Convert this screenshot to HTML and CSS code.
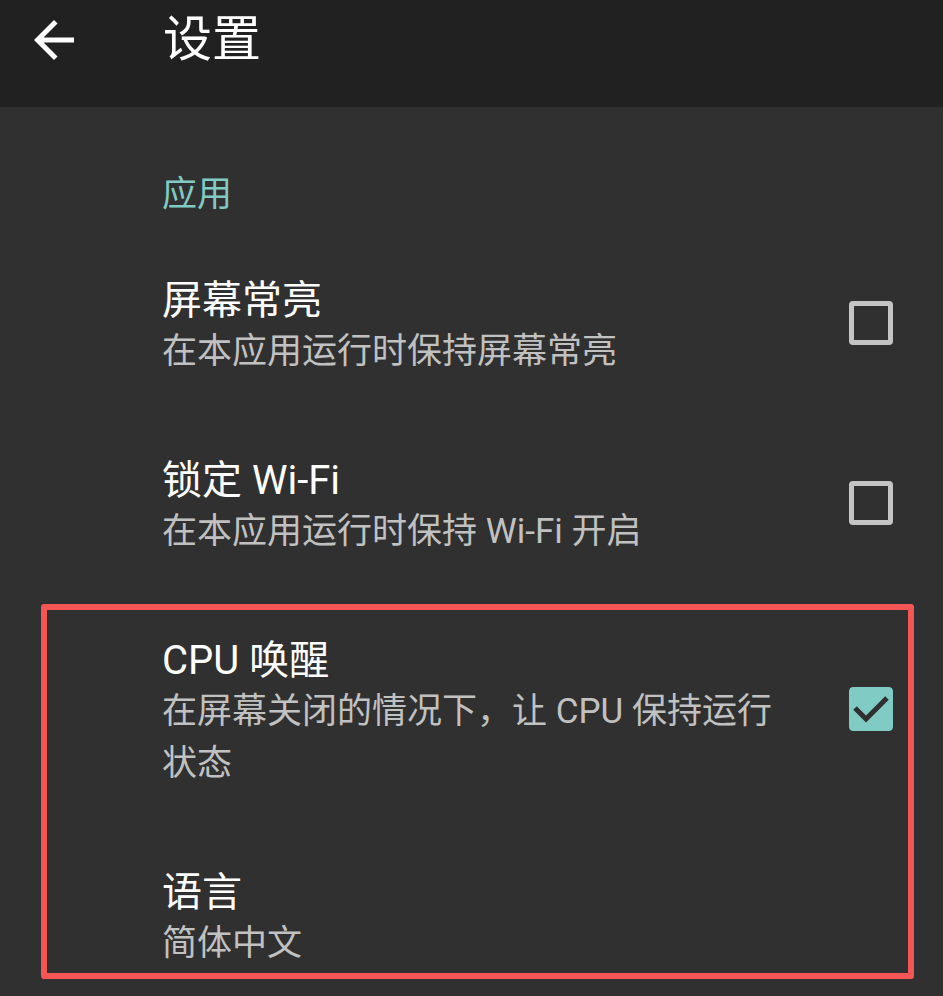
FILE: index.html
```html
<!DOCTYPE html>
<html lang="zh-CN">
<head>
    <meta charset="UTF-8">
    <meta name="viewport" content="width=device-width, initial-scale=1.0">
    <title>设置</title>
    <link rel="stylesheet" href="styles.css">
</head>
<body>
    <div class="toolbar">
        <svg class="nav-back" viewBox="0 0 24 24" width="60" height="60">
            <path d="M20 11H7.83l5.59-5.59L12 4l-8 8 8 8 1.41-1.41L7.83 13H20v-2z" fill="#fff"/>
        </svg>
        <div class="toolbar-title">设置</div>
    </div>

    <div class="prefs">
        <div class="category">应用</div>

        <div class="pref">
            <div class="pref-text">
                <div class="pref-title">屏幕常亮</div>
                <div class="pref-summary">在本应用运行时保持屏幕常亮</div>
            </div>
            <div class="check"></div>
        </div>

        <div class="pref">
            <div class="pref-text">
                <div class="pref-title">锁定 Wi-Fi</div>
                <div class="pref-summary">在本应用运行时保持 Wi-Fi 开启</div>
            </div>
            <div class="check"></div>
        </div>

        <div class="group">
            <div class="pref">
                <div class="pref-text">
                    <div class="pref-title">CPU 唤醒</div>
                    <div class="pref-summary">在屏幕关闭的情况下，让 CPU 保持运行状态</div>
                </div>
                <svg class="check on" viewBox="0 0 44 44" width="44" height="44">
                    <rect x="0" y="0" width="44" height="44" rx="4" fill="#80cbc4"/>
                    <path d="M6 21 L17 32 L38 11" fill="none" stroke="#303030" stroke-width="5"/>
                </svg>
            </div>

            <div class="pref">
                <div class="pref-text">
                    <div class="pref-title">语言</div>
                    <div class="pref-summary">简体中文</div>
                </div>
            </div>

            <div class="highlight"></div>
        </div>
    </div>
</body>
</html>
```

FILE: styles.css
```css
html, body {
    margin: 0;
    height: 996px;
    overflow: hidden;
}
body {
    background: #303030;
    font-family: Roboto, "Noto Sans CJK SC", sans-serif;
    color: #fff;
}
.toolbar {
    display: flex;
    align-items: flex-start;
    height: 107px;
    box-sizing: border-box;
    padding: 10px 0 0 24px;
    gap: 79px;
    background: #212121;
}
.nav-back {
    display: block;
    flex: none;
}
.toolbar-title {
    font-size: 49px;
    line-height: 60px;
}
.category {
    padding: 63px 0 17px 162px;
    font-size: 35px;
    line-height: 50px;
    color: #80cbc4;
}
.pref {
    display: flex;
    align-items: center;
    padding: 39px 50px 39px 162px;
}
.pref-text {
    flex: 1;
    padding-right: 60px;
}
.pref-title {
    font-size: 40px;
    line-height: 50px;
}
.pref-summary {
    font-size: 35px;
    line-height: 52px;
    color: #c1c1c1;
}
.check {
    flex: none;
    width: 44px;
    height: 44px;
    box-sizing: border-box;
    border: 5px solid #c4c4c4;
    border-radius: 4px;
    margin-bottom: 8px;
}
.check.on {
    border: 0;
    display: block;
}
.group {
    position: relative;
}
.highlight {
    position: absolute;
    left: 41px;
    right: 29px;
    top: 7px;
    bottom: 30px;
    border: 6px solid #f45656;
    border-radius: 3px;
}
```
